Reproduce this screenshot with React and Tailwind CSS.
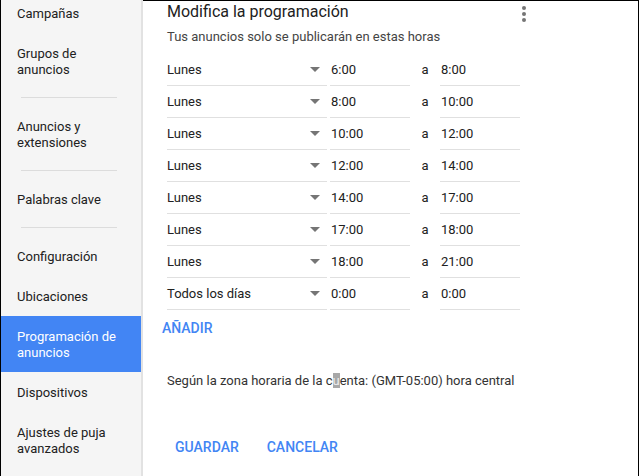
import React from 'react'

const rows = [
	{ day: 'Lunes', from: '6:00', to: '8:00' },
	{ day: 'Lunes', from: '8:00', to: '10:00' },
	{ day: 'Lunes', from: '10:00', to: '12:00' },
	{ day: 'Lunes', from: '12:00', to: '14:00' },
	{ day: 'Lunes', from: '14:00', to: '17:00' },
	{ day: 'Lunes', from: '17:00', to: '18:00' },
	{ day: 'Lunes', from: '18:00', to: '21:00' },
	{ day: 'Todos los días', from: '0:00', to: '0:00' },
]

const Divider = () => <div className="my-2 ml-[20px] h-px w-[96px] bg-[#dcdcdc]" />

const NavItem = ({ children, active, first }) => (
	<div
		className={`px-4 ${first ? 'pt-[6px] pb-[11px]' : 'pt-[13px] pb-[11px]'} text-[13px] leading-4 ${
			active ? 'bg-[#4285f4] text-white' : 'text-[#212121]'
		}`}
	>
		{children}
	</div>
)

export default function App() {
	return (
		<div
			className="flex h-[476px] w-[639px] overflow-hidden bg-white"
			style={{ fontFamily: 'Roboto, "Liberation Sans", sans-serif' }}
		>
			{/* Sidebar */}
			<aside className="w-[143px] shrink-0 border-l border-black border-r-2 border-r-[#e2e2e2] bg-[#f5f5f5]">
				<NavItem first>Campañas</NavItem>
				<NavItem>
					Grupos de
					<br />
					anuncios
				</NavItem>
				<Divider />
				<NavItem>
					Anuncios y
					<br />
					extensiones
				</NavItem>
				<Divider />
				<NavItem>Palabras clave</NavItem>
				<Divider />
				<NavItem>Configuración</NavItem>
				<NavItem>Ubicaciones</NavItem>
				<NavItem active>
					Programación de
					<br />
					anuncios
				</NavItem>
				<NavItem>Dispositivos</NavItem>
				<NavItem>
					Ajustes de puja
					<br />
					avanzados
				</NavItem>
			</aside>

			{/* Main */}
			<main className="relative flex-1 border-t border-r border-black pl-6 pt-px text-[#212121]">
				<div className="absolute left-[379px] top-[5px] flex flex-col gap-[2px]">
					<span className="h-1 w-1 rounded-full bg-[#757575]" />
					<span className="h-1 w-1 rounded-full bg-[#757575]" />
					<span className="h-1 w-1 rounded-full bg-[#757575]" />
				</div>
				<h1 className="text-[16px] leading-5">Modifica la programación</h1>
				<p className="mt-[7px] text-[13px] leading-4 text-[#444]">
					Tus anuncios solo se publicarán en estas horas
				</p>
				<div className="mt-[9px]">
					{rows.map((r, idx) => (
						<div key={idx} className="flex h-8 text-[13px]">
							<div className="flex w-[160px] items-center justify-between border-b border-[#e0e0e0] pr-[7px]">
								<span>{r.day}</span>
								<span className="h-0 w-0 border-x-[5px] border-t-[5px] border-x-transparent border-t-[#757575]" />
							</div>
							<div className="ml-[3px] flex w-[80px] items-center border-b border-[#e0e0e0] pl-px">
								{r.from}
							</div>
							<div className="flex w-[30px] items-center justify-center">a</div>
							<div className="flex w-[80px] items-center border-b border-[#e0e0e0] pl-px">
								{r.to}
							</div>
						</div>
					))}
				</div>
				<button className="-ml-[5px] mt-[10px] block text-[14px] font-medium leading-4 text-[#4285f4]">
					AÑADIR
				</button>
				<p className="mt-[37px] text-[13px] leading-4 text-[#333]">
					Según la zona horaria de la c
					<span className="bg-[#a8a8a8] text-[#eee]">u</span>
					enta: (GMT-05:00) hora central
				</p>
				<div className="mt-[50px] flex gap-[28px] pl-2">
					<button className="text-[14px] font-medium leading-4 text-[#4285f4]">GUARDAR</button>
					<button className="text-[14px] font-medium leading-4 text-[#4285f4]">CANCELAR</button>
				</div>
			</main>
		</div>
	)
}
